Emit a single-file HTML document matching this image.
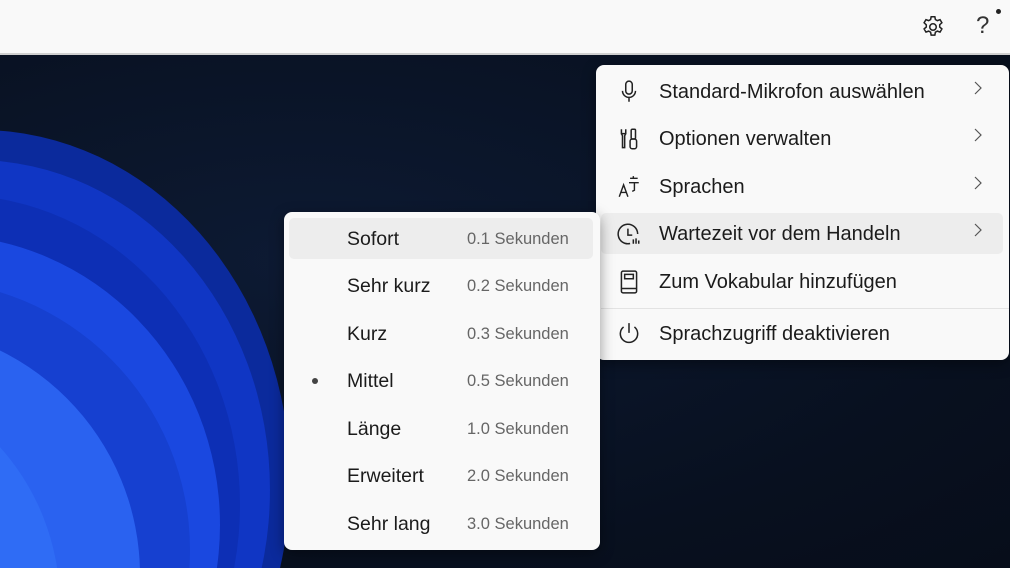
<!DOCTYPE html>
<html style="overflow:hidden;width:1010px;height:568px"><head><meta charset="utf-8"><style>
*{margin:0;padding:0;box-sizing:border-box}
body{width:1010px;height:568px;overflow:hidden;position:relative;font-family:"Liberation Sans",sans-serif;background:#0a1426}
.top{position:absolute;left:0;top:0;width:1010px;height:55px;background:#f9f9f9;border-bottom:2px solid #d0d0d0}
.bg{position:absolute;left:0;top:55px;width:1010px;height:513px;background:radial-gradient(ellipse at 30% 40%,#0d1a33 0%,#08101f 70%,#070d1a 100%);overflow:hidden}
.menu{position:absolute;background:#f9f9f9;border-radius:8px;box-shadow:0 4px 14px rgba(0,0,0,.4)}
.row{position:absolute;left:0;right:0;height:42px;display:flex;align-items:center;font-size:20px;color:#1b1b1b}
.hov{position:absolute;background:#ededed;border-radius:5px}
.ico{position:absolute;left:20px;width:26px;height:26px}
.txt{position:absolute;left:63px}
.chev{position:absolute;right:22px;top:8px;width:18px;height:18px}
.sub .txt{left:63px;font-size:19.5px}
.sub .r{position:absolute;left:183px;font-size:16.5px;color:#666}
</style></head><body>
<div class="top">
<svg style="position:absolute;left:920px;top:14px" width="26" height="26" viewBox="0 0 24 24" fill="none" stroke="#222" stroke-width="1.4"><circle cx="12" cy="12" r="3"/><path d="M10.3 2.5h3.4l.5 2.6 1.8 1 2.5-.9 1.7 2.9-2 1.8v2.1l2 1.8-1.7 2.9-2.5-.9-1.8 1-.5 2.7h-3.4l-.5-2.7-1.8-1-2.5.9-1.7-2.9 2-1.8V10L3.8 8.1l1.7-2.9 2.5.9 1.8-1z"/></svg>
<div style="position:absolute;left:976px;top:12px;font-size:24px;color:#333">?</div>
<div style="position:absolute;left:996px;top:9px;width:5px;height:5px;border-radius:50%;background:#222"></div>
</div>
<div class="bg">
<svg width="1010" height="513" style="position:absolute;left:0;top:0">
<ellipse cx="-20" cy="425" rx="310" ry="350" fill="#0b2a9c"/>
<ellipse cx="-25" cy="435" rx="295" ry="330" fill="#1036c4"/>
<ellipse cx="-45" cy="450" rx="285" ry="310" fill="#0d2fb5"/>
<ellipse cx="-60" cy="470" rx="280" ry="290" fill="#1a48e0"/>
<ellipse cx="-80" cy="495" rx="270" ry="270" fill="#1640d0"/>
<ellipse cx="-110" cy="520" rx="250" ry="250" fill="#2a62f0"/>
<ellipse cx="-160" cy="550" rx="220" ry="230" fill="#2f6cf5"/>
<ellipse cx="-200" cy="580" rx="200" ry="200" fill="#4a86fa"/>
</svg>
</div>

<div class="menu" style="left:596px;top:65px;width:413px;height:295px">
<div class="hov" style="left:5px;top:148px;width:402px;height:41px"></div>
<div style="position:absolute;left:5px;right:0;top:243px;height:1px;background:#e3e3e3"></div>
<div class="row" style="top:6px"><svg class="ico" viewBox="0 0 24 24" fill="none" stroke="#222" stroke-width="1.4"><rect x="9" y="2" width="6" height="12" rx="3"/><path d="M6 11a6 6 0 0012 0M12 17v4"/></svg><span class="txt">Standard-Mikrofon auswählen</span><svg class="chev" viewBox="0 0 18 18" fill="none" stroke="#555" stroke-width="1.2"><path d="M6 3l6 6-6 6"/></svg></div>
<div class="row" style="top:53px"><svg class="ico" viewBox="0 0 24 24" fill="none" stroke="#222" stroke-width="1.4"><path d="M5 3v4h4V3M5 7l1 2v11h2V9l1-2"/><rect x="14" y="3" width="4" height="9" rx="1"/><rect x="13" y="12" width="6" height="9" rx="2"/></svg><span class="txt">Optionen verwalten</span><svg class="chev" viewBox="0 0 18 18" fill="none" stroke="#555" stroke-width="1.2"><path d="M6 3l6 6-6 6"/></svg></div>
<div class="row" style="top:101px"><svg class="ico" viewBox="0 0 24 24" fill="none" stroke="#222" stroke-width="1.3"><path d="M3 21l4-11 4 11M4.5 17h5M13 4h7M16 2v2M12 8h9M17 8v7l-2 1"/></svg><span class="txt">Sprachen</span><svg class="chev" viewBox="0 0 18 18" fill="none" stroke="#555" stroke-width="1.2"><path d="M6 3l6 6-6 6"/></svg></div>
<div class="row" style="top:148px"><svg class="ico" viewBox="0 0 24 24" fill="none" stroke="#222" stroke-width="1.4"><path d="M20 12a9 9 0 10-7 8.8M11 7v6h4M16 17v4M18.5 16v5M21 18v3"/></svg><span class="txt">Wartezeit vor dem Handeln</span><svg class="chev" viewBox="0 0 18 18" fill="none" stroke="#555" stroke-width="1.2"><path d="M6 3l6 6-6 6"/></svg></div>
<div class="row" style="top:196px"><svg class="ico" viewBox="0 0 24 24" fill="none" stroke="#222" stroke-width="1.4"><rect x="5" y="2" width="14" height="20" rx="1.5"/><path d="M5 18h14M8 5h8v4H8z"/></svg><span class="txt">Zum Vokabular hinzufügen</span></div>
<div class="row" style="top:248px"><svg class="ico" viewBox="0 0 24 24" fill="none" stroke="#222" stroke-width="1.4"><path d="M12 2v9M7 5.5a8 8 0 1010 0"/></svg><span class="txt">Sprachzugriff deaktivieren</span></div>
</div>

<div class="menu sub" style="left:284px;top:212px;width:316px;height:338px">
<div class="hov" style="left:5px;top:6px;width:304px;height:41px"></div>
<div class="row" style="top:6px"><span class="txt">Sofort</span><span class="r">0.1 Sekunden</span></div>
<div class="row" style="top:53px"><span class="txt">Sehr kurz</span><span class="r">0.2 Sekunden</span></div>
<div class="row" style="top:101px"><span class="txt">Kurz</span><span class="r">0.3 Sekunden</span></div>
<div class="row" style="top:148px"><span style="position:absolute;left:28px;width:6px;height:6px;border-radius:50%;background:#444"></span><span class="txt">Mittel</span><span class="r">0.5 Sekunden</span></div>
<div class="row" style="top:196px"><span class="txt">Länge</span><span class="r">1.0 Sekunden</span></div>
<div class="row" style="top:243px"><span class="txt">Erweitert</span><span class="r">2.0 Sekunden</span></div>
<div class="row" style="top:291px"><span class="txt">Sehr lang</span><span class="r">3.0 Sekunden</span></div>
</div>
</body></html>
